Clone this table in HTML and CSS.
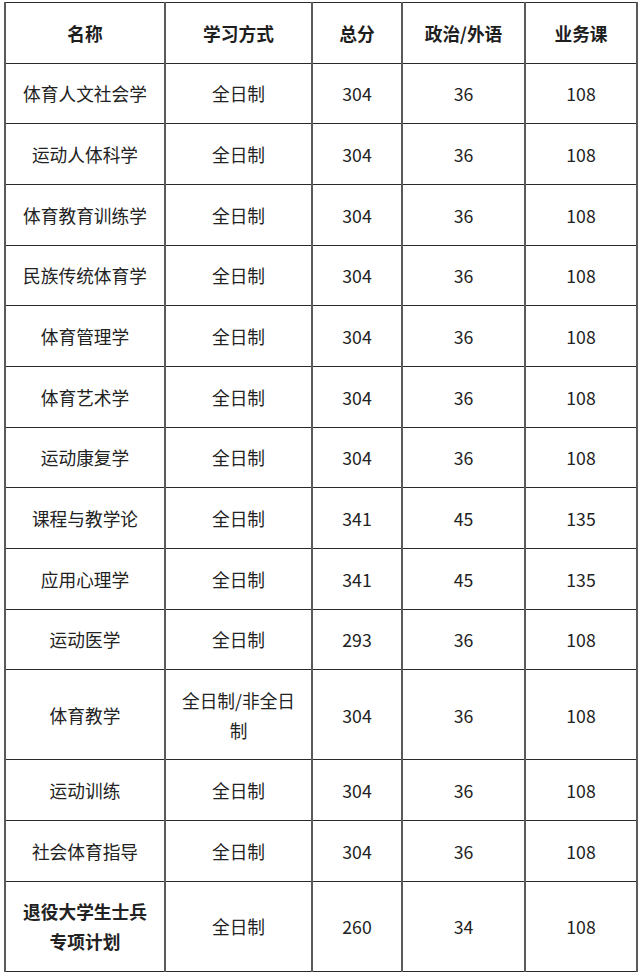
FILE: index.html
```html
<!DOCTYPE html>
<html lang="zh">
<head>
<meta charset="utf-8">
<link rel="stylesheet" href="styles.css">
</head>
<body>
<div class="page">
<table class="score">
<colgroup>
<col class="c1"><col class="c2"><col class="c3"><col class="c4"><col class="c5">
</colgroup>
<thead>
<tr><th>名称</th><th>学习方式</th><th>总分</th><th>政治/外语</th><th>业务课</th></tr>
</thead>
<tbody>
<tr><td>体育人文社会学</td><td>全日制</td><td>304</td><td>36</td><td>108</td></tr>
<tr><td>运动人体科学</td><td>全日制</td><td>304</td><td>36</td><td>108</td></tr>
<tr><td>体育教育训练学</td><td>全日制</td><td>304</td><td>36</td><td>108</td></tr>
<tr><td>民族传统体育学</td><td>全日制</td><td>304</td><td>36</td><td>108</td></tr>
<tr><td>体育管理学</td><td>全日制</td><td>304</td><td>36</td><td>108</td></tr>
<tr><td>体育艺术学</td><td>全日制</td><td>304</td><td>36</td><td>108</td></tr>
<tr><td>运动康复学</td><td>全日制</td><td>304</td><td>36</td><td>108</td></tr>
<tr><td>课程与教学论</td><td>全日制</td><td>341</td><td>45</td><td>135</td></tr>
<tr><td>应用心理学</td><td>全日制</td><td>341</td><td>45</td><td>135</td></tr>
<tr><td>运动医学</td><td>全日制</td><td>293</td><td>36</td><td>108</td></tr>
<tr class="tall"><td>体育教学</td><td class="wrap">全日制/非全日制</td><td>304</td><td>36</td><td>108</td></tr>
<tr><td>运动训练</td><td>全日制</td><td>304</td><td>36</td><td>108</td></tr>
<tr><td>社会体育指导</td><td>全日制</td><td>304</td><td>36</td><td>108</td></tr>
<tr class="tall"><td class="bold">退役大学生士兵<br>专项计划</td><td>全日制</td><td>260</td><td>34</td><td>108</td></tr>
</tbody>
</table>
</div>
</body>
</html>
```

FILE: styles.css
```css
html, body {
  margin: 0;
  padding: 0;
  background: #ffffff;
}

.page {
  padding: 2px 0 0 4px;
  font-family: "Noto Sans CJK SC", "Noto Sans", sans-serif;
  color: #222222;
}

.score {
  border-collapse: collapse;
  table-layout: fixed;
  width: 632px;
  font-size: 17.7px;
}

.c1 { width: 160px; }
.c2 { width: 147px; }
.c3 { width: 90px; }
.c4 { width: 123px; }
.c5 { width: 112px; }

.score th,
.score td {
  border-top: 1.5px solid #2a2a2a;
  border-bottom: 1.5px solid #2a2a2a;
  border-left: 2px solid #5a5a5a;
  border-right: 2px solid #5a5a5a;
  text-align: center;
  vertical-align: middle;
  padding: 0 6px;
  line-height: 30px;
  height: 60.67px;
  box-sizing: border-box;
}

.score th {
  font-weight: bold;
  color: #1e1e1e;
}

.score tr.tall td {
  height: 90px;
}

.score td.wrap {
  padding: 0 10px;
}

.score td.bold {
  font-weight: bold;
}
```
